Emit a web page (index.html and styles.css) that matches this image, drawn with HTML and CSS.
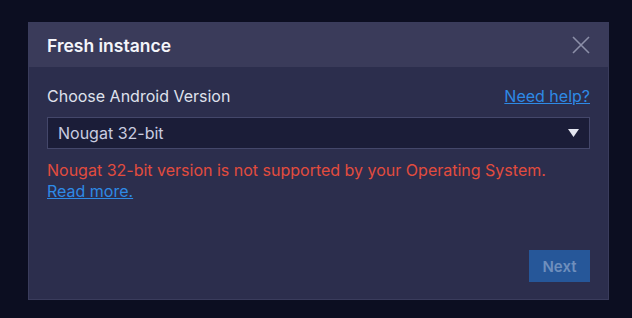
FILE: index.html
```html
<!DOCTYPE html>
<html>
<head>
<meta charset="utf-8">
<link rel="stylesheet" href="styles.css">
</head>
<body>
<div class="dialog">
  <div class="header">
    <span class="title">Fresh instance</span>
    <svg class="close" width="18" height="18" viewBox="0 0 18 18"><path d="M1 1L17 17M17 1L1 17" stroke="#8c8fa8" stroke-width="1.6" fill="none"/></svg>
  </div>
  <div class="content">
    <div class="row">
      <span class="label">Choose Android Version</span>
      <a class="link">Need help?</a>
    </div>
    <div class="select">
      <span>Nougat 32-bit</span>
      <svg class="caret" width="11" height="8" viewBox="0 0 11 8"><path d="M0 0H11L5.5 8Z" fill="#e4e6f0"/></svg>
    </div>
    <div class="error">Nougat 32-bit version is not supported by your Operating System.<br><a class="link">Read more.</a></div>
    <div class="footer">
      <button class="next">Next</button>
    </div>
  </div>
</div>
</body>
</html>
```

FILE: styles.css
```css
html, body {
  margin: 0;
  height: 100%;
}
body {
  background: #0c0e21;
  font-family: "Inter", "Noto Sans", sans-serif;
  padding: 22px 23px 0 28px;
  box-sizing: border-box;
}
.dialog {
  height: 278px;
  background: #2c2e4d;
  border: 1px solid #3a3c5c;
  box-sizing: border-box;
  display: flex;
  flex-direction: column;
}
.header {
  height: 44px;
  background: #3a3b5a;
  display: flex;
  align-items: center;
  justify-content: space-between;
  padding: 0 18px 0 18px;
  flex-shrink: 0;
}
.title {
  color: #f4f5fa;
  font-size: 17.5px;
  font-weight: 600;
}
.close {
  display: block;
}
.content {
  flex: 1;
  display: flex;
  flex-direction: column;
  padding: 19px 18px 17px 18px;
}
.row {
  display: flex;
  justify-content: space-between;
  align-items: center;
  height: 20px;
}
.label {
  color: #dfe1ec;
  font-size: 16px;
}
.link {
  color: #2e8ae6;
  text-decoration: underline;
  font-size: 16px;
  cursor: pointer;
}
.select {
  margin-top: 11px;
  height: 32px;
  box-sizing: border-box;
  background: #1b1d38;
  border: 1px solid #44476a;
  display: flex;
  align-items: center;
  justify-content: space-between;
  padding: 0 10px 0 10px;
  color: #c9cce0;
  font-size: 16px;
}
.caret {
  display: block;
}
.error {
  margin-top: 11px;
  color: #e24c3e;
  font-size: 16px;
  line-height: 21px;
}
.footer {
  margin-top: auto;
  display: flex;
  justify-content: flex-end;
}
.next {
  width: 61px;
  height: 32px;
  border: none;
  background: #265799;
  color: #6f8fbd;
  font-family: inherit;
  font-size: 15px;
  font-weight: 600;
  padding: 0;
}
```
